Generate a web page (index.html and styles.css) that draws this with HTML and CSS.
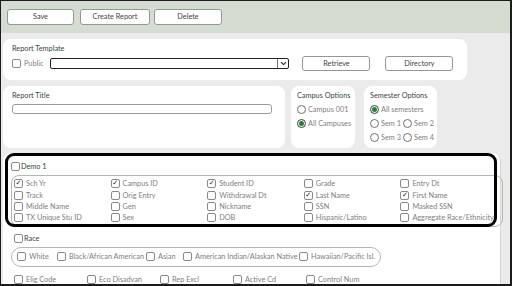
FILE: index.html
```html
<!DOCTYPE html>
<html>
<head>
<meta charset="utf-8">
<link rel="stylesheet" href="styles.css">
</head>
<body>
<div class="frame">
  <div class="toolbar">
    <button class="btn btn-save">Save</button>
    <button class="btn btn-create">Create Report</button>
    <button class="btn btn-delete">Delete</button>
  </div>
  <div class="content">
    <div class="card template">
      <div class="heading">Report Template</div>
      <div class="template-row">
        <span class="cb"></span><span class="opt public">Public</span>
        <div class="select"><span class="arrow"><svg width="7" height="5" viewBox="0 0 7 5"><path d="M1 1.2 L3.5 3.6 L6 1.2" fill="none" stroke="#222" stroke-width="1.1"/></svg></span></div>
        <button class="btn btn-retrieve">Retrieve</button>
        <button class="btn btn-directory">Directory</button>
      </div>
    </div>
    <div class="row2">
      <div class="card title-card">
        <div class="heading">Report Title</div>
        <div class="text-input"></div>
      </div>
      <div class="card campus-card">
        <div class="heading">Campus Options</div>
        <div class="radio-line"><span class="rb"></span><span class="opt">Campus 001</span></div>
        <div class="radio-line"><span class="rb on"></span><span class="opt">All Campuses</span></div>
      </div>
      <div class="card sem-card">
        <div class="heading">Semester Options</div>
        <div class="radio-line"><span class="rb on"></span><span class="opt">All semesters</span></div>
        <div class="radio-line"><span class="sem"><span class="rb"></span><span class="opt">Sem 1</span></span><span class="sem"><span class="rb"></span><span class="opt">Sem 2</span></span></div>
        <div class="radio-line"><span class="sem"><span class="rb"></span><span class="opt">Sem 3</span></span><span class="sem"><span class="rb"></span><span class="opt">Sem 4</span></span></div>
      </div>
    </div>
    <div class="panel">
      <div class="highlight"></div>
      <div class="group-head demo"><span class="cb"></span><span class="gname">Demo 1</span></div>
      <div class="fieldset demo-grid">
        <div class="item"><span class="cb on">✓</span><span class="opt">Sch Yr</span></div>
        <div class="item"><span class="cb on">✓</span><span class="opt">Campus ID</span></div>
        <div class="item"><span class="cb on">✓</span><span class="opt">Student ID</span></div>
        <div class="item"><span class="cb"></span><span class="opt">Grade</span></div>
        <div class="item"><span class="cb"></span><span class="opt">Entry Dt</span></div>
        <div class="item"><span class="cb"></span><span class="opt">Track</span></div>
        <div class="item"><span class="cb"></span><span class="opt">Orig Entry</span></div>
        <div class="item"><span class="cb"></span><span class="opt">Withdrawal Dt</span></div>
        <div class="item"><span class="cb on">✓</span><span class="opt">Last Name</span></div>
        <div class="item"><span class="cb on">✓</span><span class="opt">First Name</span></div>
        <div class="item"><span class="cb"></span><span class="opt">Middle Name</span></div>
        <div class="item"><span class="cb"></span><span class="opt">Gen</span></div>
        <div class="item"><span class="cb"></span><span class="opt">Nickname</span></div>
        <div class="item"><span class="cb"></span><span class="opt">SSN</span></div>
        <div class="item"><span class="cb"></span><span class="opt">Masked SSN</span></div>
        <div class="item"><span class="cb"></span><span class="opt">TX Unique Stu ID</span></div>
        <div class="item"><span class="cb"></span><span class="opt">Sex</span></div>
        <div class="item"><span class="cb"></span><span class="opt">DOB</span></div>
        <div class="item"><span class="cb"></span><span class="opt">Hispanic/Latino</span></div>
        <div class="item"><span class="cb"></span><span class="opt">Aggregate Race/Ethnicity</span></div>
      </div>
      <div class="group-head race"><span class="cb"></span><span class="gname">Race</span></div>
      <div class="pill">
        <div class="item"><span class="cb"></span><span class="opt">White</span></div>
        <div class="item"><span class="cb"></span><span class="opt">Black/African American</span></div>
        <div class="item"><span class="cb"></span><span class="opt">Asian</span></div>
        <div class="item"><span class="cb"></span><span class="opt">American Indian/Alaskan Native</span></div>
        <div class="item"><span class="cb"></span><span class="opt">Hawaiian/Pacific Isl.</span></div>
      </div>
      <div class="flags">
        <div class="item"><span class="cb"></span><span class="opt">Elig Code</span></div>
        <div class="item"><span class="cb"></span><span class="opt">Eco Disadvan</span></div>
        <div class="item"><span class="cb"></span><span class="opt">Rep Excl</span></div>
        <div class="item"><span class="cb"></span><span class="opt">Active Cd</span></div>
        <div class="item"><span class="cb"></span><span class="opt">Control Num</span></div>
      </div>
    </div>
  </div>
</div>
</body>
</html>
```
FILE: styles.css
```css
* { box-sizing: border-box; }
html, body { margin: 0; padding: 0; background: #ebebeb; }
body { font-family: Lato, "Liberation Sans", sans-serif; font-size: 7.3px; color: #555; }

.frame {
  width: 512px; height: 286px; overflow: hidden;
  border-top: 1px solid #1c1c1c; border-right: 2px solid #1c1c1c;
  border-bottom: 2px solid #1c1c1c; border-left: 1px solid #1c1c1c;
  background: #ebebeb;
  display: flex; flex-direction: column;
}

.toolbar {
  height: 32px; flex: none;
  background: #d5ddd3;
  padding: 8px 0 0 6px;
  display: flex; align-items: flex-start;
}
.btn {
  height: 16px; padding: 0;
  background: #fff; border: 1px solid #8d9c8b; border-radius: 3px;
  font-family: Lato, "Liberation Sans", sans-serif; font-size: 7.3px; color: #444;
  line-height: 14px; text-align: center;
}
.btn-save { width: 67px; margin-right: 6px; }
.btn-create { width: 70px; margin-right: 4px; }
.btn-delete { width: 68px; }

.content { flex: 1; padding: 6px 0 0 2px; display: flex; flex-direction: column; }

.card { background: #fff; border-radius: 8px; }
.heading { color: #34493b; line-height: 9px; height: 9px; }

.template { width: 464px; height: 41px; padding: 5px 0 0 9px; }
.template-row { display: flex; align-items: center; margin-top: 3px; height: 15px; }
.cb {
  width: 9px; height: 9px; flex: none;
  border: 1px solid #8a8a8a; border-radius: 2px; background: #fff;
  display: inline-flex; align-items: center; justify-content: center;
  font-size: 7px; line-height: 1; color: #222; font-family: "DejaVu Sans", sans-serif;
}
.opt { color: #808080; white-space: nowrap; }
.public { margin-left: 3px; }
.select {
  width: 239px; height: 11px; margin-left: 7px;
  border: 1px solid #222; border-radius: 2px;
  display: flex; justify-content: flex-end;
}
.arrow {
  width: 11px; height: 9px; border-left: 1px solid #777;
  display: flex; align-items: center; justify-content: center;
}
.btn-retrieve { width: 68px; height: 15px; margin-left: 13px; line-height: 13px; }
.btn-directory { width: 68px; height: 15px; margin-left: 15px; line-height: 13px; }

.row2 { display: flex; margin-top: 6px; height: 62px; }
.title-card { width: 282px; padding: 5px 0 0 9px; }
.text-input {
  width: 260px; height: 10px; margin-top: 4px;
  border: 1px solid #9a9a9a; border-radius: 3px;
}
.campus-card { width: 64px; margin-left: 6px; padding: 5px 0 0 6px; }
.sem-card { width: 73px; margin-left: 9px; padding: 5px 0 0 6px; }
.radio-line { display: flex; align-items: center; height: 14px; }
.heading + .radio-line { margin-top: 2px; }
.rb {
  width: 9px; height: 9px; flex: none; border-radius: 50%;
  border: 1px solid #6f6f6f; background: #fff; margin-right: 2px;
  display: inline-flex; align-items: center; justify-content: center;
}
.rb.on { border-color: #1f4a28; }
.rb.on::after { content: ""; width: 5px; height: 5px; border-radius: 50%; background: #2f7a3a; }
.sem { display: flex; align-items: center; width: 33px; }

.panel {
  position: relative; flex: 1;
  width: 498px; margin-top: 5px;
  background: #fff; border-radius: 8px 8px 0 0;
  border-right: 1px solid #d2d8d0;
  padding: 8px 0 0 8px;
}
.highlight {
  position: absolute; left: 2px; top: 0; width: 492px; height: 74px;
  border: 3px solid #000; border-radius: 9px; pointer-events: none;
}
.group-head { display: flex; align-items: center; height: 10px; }
.gname { color: #34493b; margin-left: 1px; }
.fieldset {
  margin-top: 4px; width: 492px;
  border: 1px solid #aebcab; border-radius: 8px;
  padding: 2px 0 2px 2px;
}
.demo-grid { display: grid; grid-template-columns: repeat(5, 96.6px); grid-auto-rows: 11.4px; }
.item { display: flex; align-items: center; }
.item .cb { margin-right: 3px; }
.race { margin-top: 7px; padding-left: 3px; }
.pill {
  margin-top: 3px; width: 370px; height: 20px;
  border: 1px solid #aebcab; border-radius: 10px;
  padding-left: 5px;
  display: grid; grid-template-columns: 40px 89px 37px 116px auto; align-items: center;
}
.flags {
  margin-top: 8px; padding-left: 3px; height: 10px;
  display: grid; grid-template-columns: repeat(5, 73px); align-items: center;
}
```
